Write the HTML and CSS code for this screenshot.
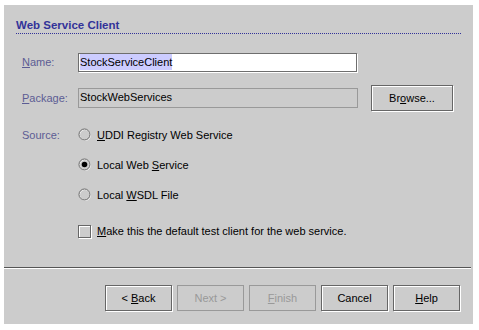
FILE: index.html
```html
<!DOCTYPE html>
<html>
<head>
<meta charset="utf-8">
<link rel="stylesheet" href="styles.css">
</head>
<body>
<div class="panel">
  <div class="header">Web Service Client</div>

  <div class="row row-name">
    <span class="label"><u>N</u>ame:</span>
    <div class="input"><span class="sel">StockServiceClient</span></div>
  </div>

  <div class="row row-package">
    <span class="label"><u>P</u>ackage:</span>
    <div class="input input-disabled">StockWebServices</div>
    <button class="btn btn-browse">Br<u>o</u>wse...</button>
  </div>

  <div class="row row-source">
    <span class="label">Source:</span>
    <span class="choice">
      <svg class="radio" width="14" height="14" viewBox="0 0 14 14"><circle cx="7" cy="7" r="5.5" fill="none" stroke="#fff"/><circle cx="6.5" cy="6.5" r="5.5" fill="none" stroke="#666"/></svg>
      <span><u>U</u>DDI Registry Web Service</span>
    </span>
  </div>
  <div class="row row-option">
    <span class="label"></span>
    <span class="choice">
      <svg class="radio" width="14" height="14" viewBox="0 0 14 14"><circle cx="7" cy="7" r="5.5" fill="none" stroke="#fff"/><circle cx="6.5" cy="6.5" r="5.5" fill="none" stroke="#666"/><circle cx="6.5" cy="6.5" r="2.8" fill="#000"/></svg>
      <span>Local Web <u>S</u>ervice</span>
    </span>
  </div>
  <div class="row row-option">
    <span class="label"></span>
    <span class="choice">
      <svg class="radio" width="14" height="14" viewBox="0 0 14 14"><circle cx="7" cy="7" r="5.5" fill="none" stroke="#fff"/><circle cx="6.5" cy="6.5" r="5.5" fill="none" stroke="#666"/></svg>
      <span>Local <u>W</u>SDL File</span>
    </span>
  </div>
  <div class="row row-check">
    <span class="label"></span>
    <span class="choice">
      <span class="checkbox"></span>
      <span><u>M</u>ake this the default test client for the web service.</span>
    </span>
  </div>

  <div class="separator"></div>

  <div class="buttons">
    <button class="btn">&lt; <u>B</u>ack</button>
    <button class="btn btn-disabled">Next &gt;</button>
    <button class="btn btn-disabled"><u>F</u>inish</button>
    <button class="btn">Cancel</button>
    <button class="btn"><u>H</u>elp</button>
  </div>
</div>
</body>
</html>
```

FILE: styles.css
```css
html, body {
  margin: 0;
  padding: 0;
  background: #ffffff;
}

body {
  font-family: "Liberation Sans", Arial, sans-serif;
  font-size: 11px;
  color: #000;
}

.panel {
  margin: 5px 0 0 4px;
  width: 469px;
  height: 319px;
  background: #cccccc;
  box-sizing: border-box;
  overflow: hidden;
}

.header {
  margin: 0 12px 0 12px;
  padding-top: 13px;
  padding-bottom: 1px;
  line-height: 14px;
  font-weight: bold;
  font-size: 11.5px;
  color: #333399;
  border-bottom: 1px dotted #333399;
}

.row {
  display: flex;
  align-items: center;
  padding-left: 18px;
}

.label {
  width: 56px;
  flex: none;
  color: #5c5c94;
}

.label u {
  text-decoration-color: #5c5c94;
}

.row-name {
  margin-top: 18px;
  height: 20px;
}

.input {
  width: 279px;
  height: 19px;
  box-sizing: border-box;
  border: 1px solid #6e6e6e;
  box-shadow: 1px 1px 0 #ffffff;
  background: #ffffff;
  padding-left: 1px;
  line-height: 17px;
  display: flex;
  align-items: center;
}

.sel {
  background: #ccccff;
  line-height: 16px;
}

.row-package {
  margin-top: 12px;
  height: 27px;
}

.input-disabled {
  background: #cccccc;
  border-color: #999999;
  box-shadow: none;
  width: 280px;
  height: 20px;
}

.btn {
  font-family: "Liberation Sans", Arial, sans-serif;
  font-size: 11px;
  color: #000;
  background: #cccccc;
  width: 67px;
  height: 26px;
  padding: 0;
  margin: 0;
  box-sizing: border-box;
  border: 1px solid #666666;
  box-shadow: 1px 1px 0 #ffffff, inset 1px 1px 0 #ffffff;
  flex: none;
}

.btn-browse {
  margin-left: 13px;
  width: 82px;
}

.btn-disabled {
  color: #999999;
  border-color: #999999;
  box-shadow: none;
}

.row-source {
  margin-top: 9px;
  height: 30px;
}

.row-option {
  height: 30px;
}

.row-check {
  margin-top: 6px;
  height: 30px;
}

.choice {
  display: flex;
  align-items: center;
}

.radio {
  flex: none;
  margin-right: 5px;
}

.checkbox {
  flex: none;
  width: 13px;
  height: 13px;
  box-sizing: border-box;
  border: 1px solid #666666;
  box-shadow: 1px 1px 0 #ffffff, inset 1px 1px 0 #ffffff;
  margin-right: 6px;
}

.separator {
  margin-top: 21px;
  margin-right: 2px;
  border-top: 1px solid #555555;
  border-bottom: 1px solid #ffffff;
}

.buttons {
  margin-top: 16px;
  padding-left: 101px;
  display: flex;
  gap: 5px;
}
```
